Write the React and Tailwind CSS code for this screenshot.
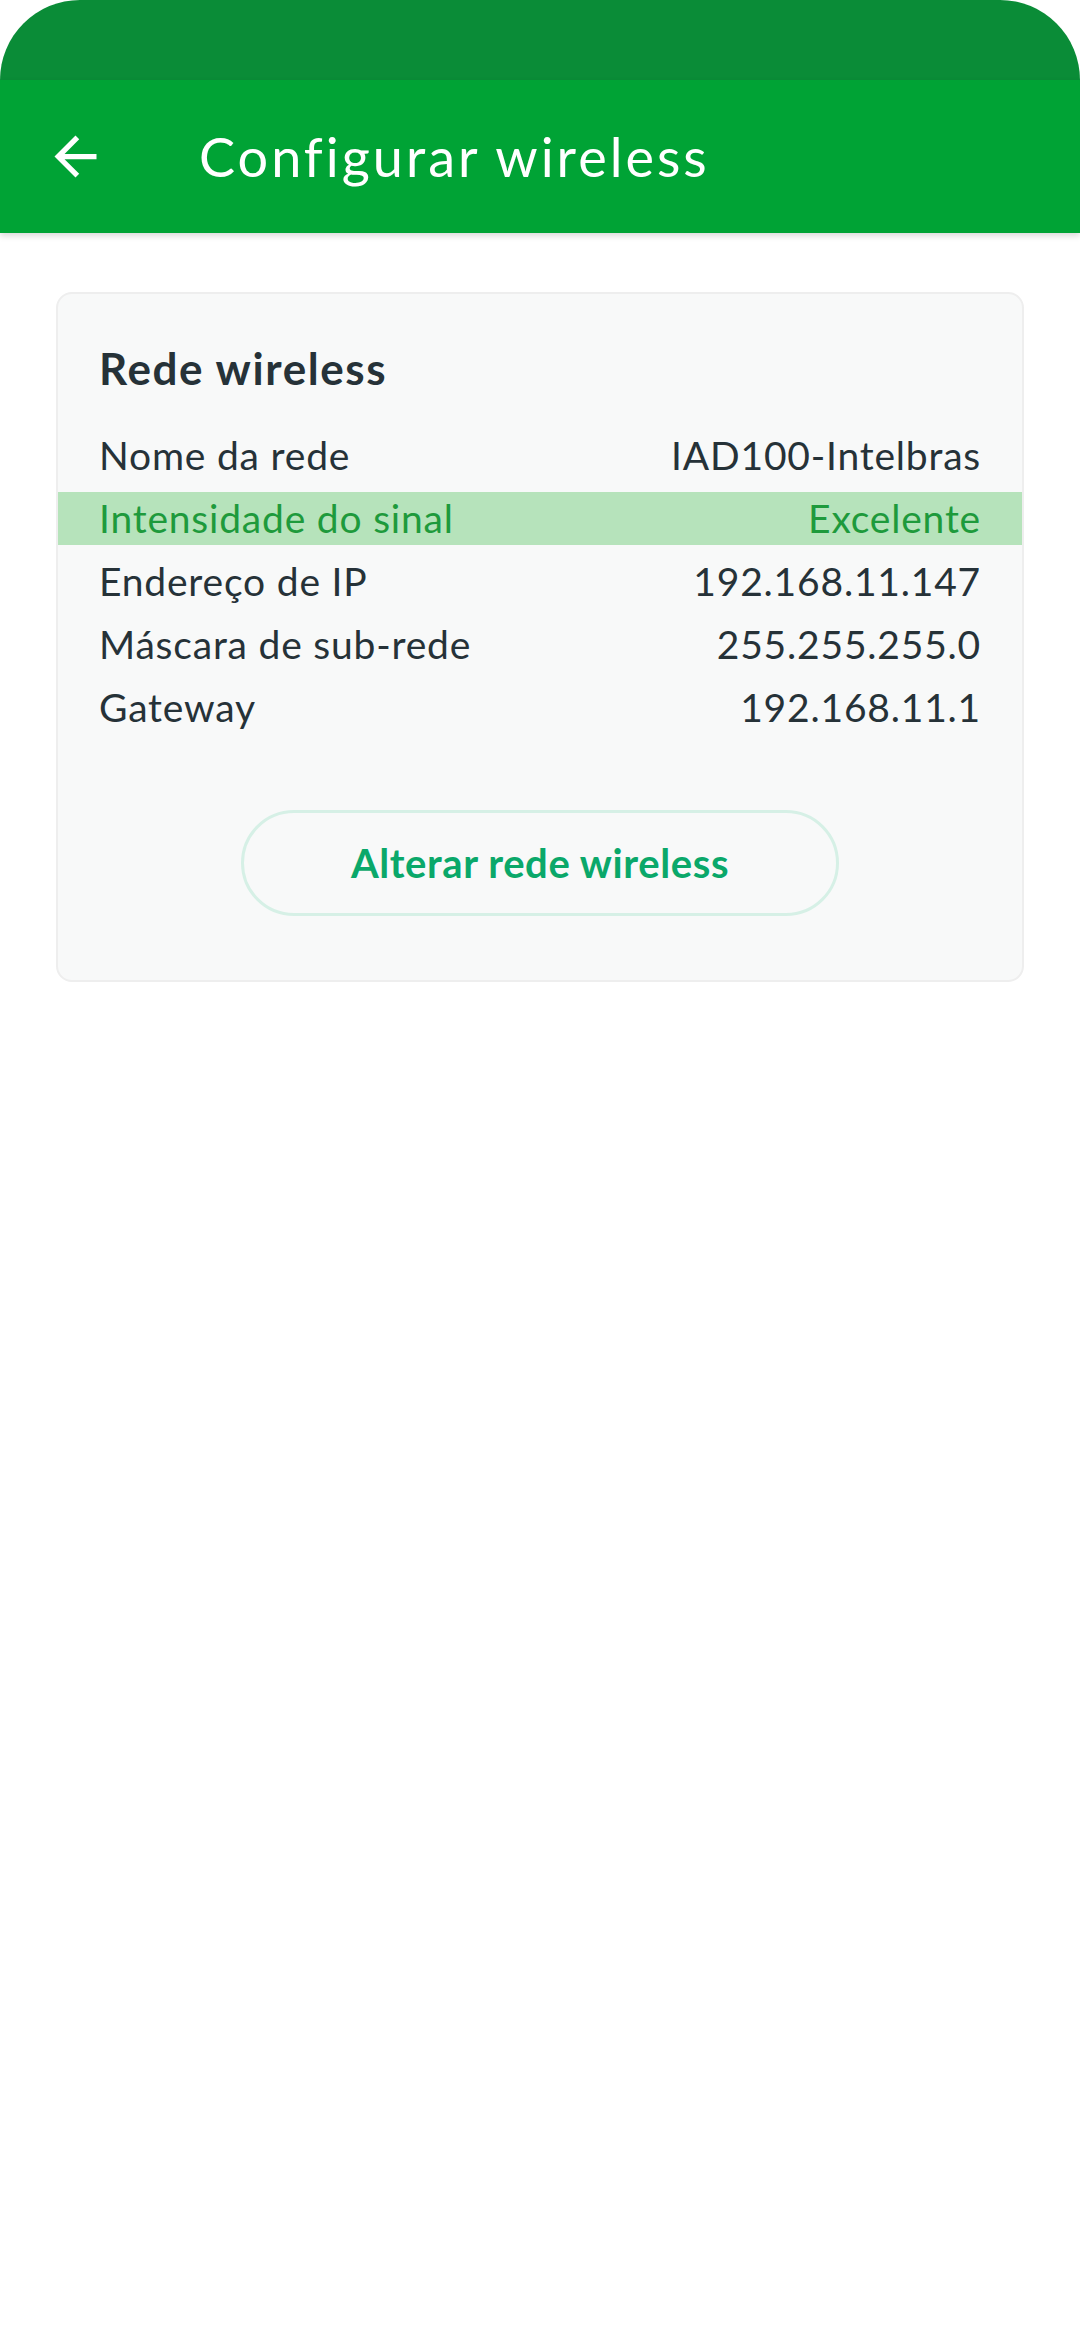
const rows = [
  { label: "Nome da rede", value: "IAD100-Intelbras" },
  { label: "Intensidade do sinal", value: "Excelente", highlight: true },
  { label: "Endereço de IP", value: "192.168.11.147" },
  { label: "Máscara de sub-rede", value: "255.255.255.0" },
  { label: "Gateway", value: "192.168.11.1" },
];

function BackIcon() {
  return (
    <svg viewBox="0 0 24 24" className="w-[63px] h-[63px]" fill="#ffffff">
      <path d="M20 11H7.83l5.59-5.59L12 4l-8 8 8 8 1.41-1.41L7.83 13H20v-2z" />
    </svg>
  );
}

export default function App() {
  return (
    <div
      className="w-[1080px] min-h-[2340px] bg-white text-[#263238]"
      style={{ fontFamily: "Lato, 'Noto Sans', sans-serif" }}
    >
      {/* status bar */}
      <div className="h-[80px] bg-[#0a8c37] rounded-t-[80px]" />

      {/* app bar */}
      <header className="h-[153px] bg-[#00a335] flex items-center shadow-[0_3px_6px_rgba(0,0,0,0.15)] relative">
        <button className="ml-[44px]">
          <BackIcon />
        </button>
        <h1 className="ml-[92px] text-[54px] tracking-[3px] text-white">
          Configurar wireless
        </h1>
      </header>

      {/* card */}
      <div className="mx-[56px] mt-[59px] border-2 border-[#eeeeee] rounded-[16px] bg-[#f8f9f9] pt-[46px] pb-[64px]">
        <h2 className="px-[41px] text-[44px] leading-[56px] font-bold tracking-[1.6px]">
          Rede wireless
        </h2>

        <div className="mt-[33px] flex flex-col gap-[10px]">
          {rows.map((row) => (
            <div
              key={row.label}
              className={
                row.highlight
                  ? "h-[53px] flex items-center justify-between px-[41px] text-[39px] tracking-[0.8px] bg-[#b6e3bb] text-[#1e9a3c]"
                  : "h-[53px] flex items-center justify-between px-[41px] text-[39px] tracking-[0.8px]"
              }
            >
              <span>{row.label}</span>
              <span>{row.value}</span>
            </div>
          ))}
        </div>

        <div className="mt-[76px] flex justify-center">
          <button className="w-[598px] h-[106px] rounded-full border-[3px] border-[#d6f0e6] text-[40px] font-bold tracking-[0.6px] text-[#0aa86a]">
            Alterar rede wireless
          </button>
        </div>
      </div>
    </div>
  );
}
